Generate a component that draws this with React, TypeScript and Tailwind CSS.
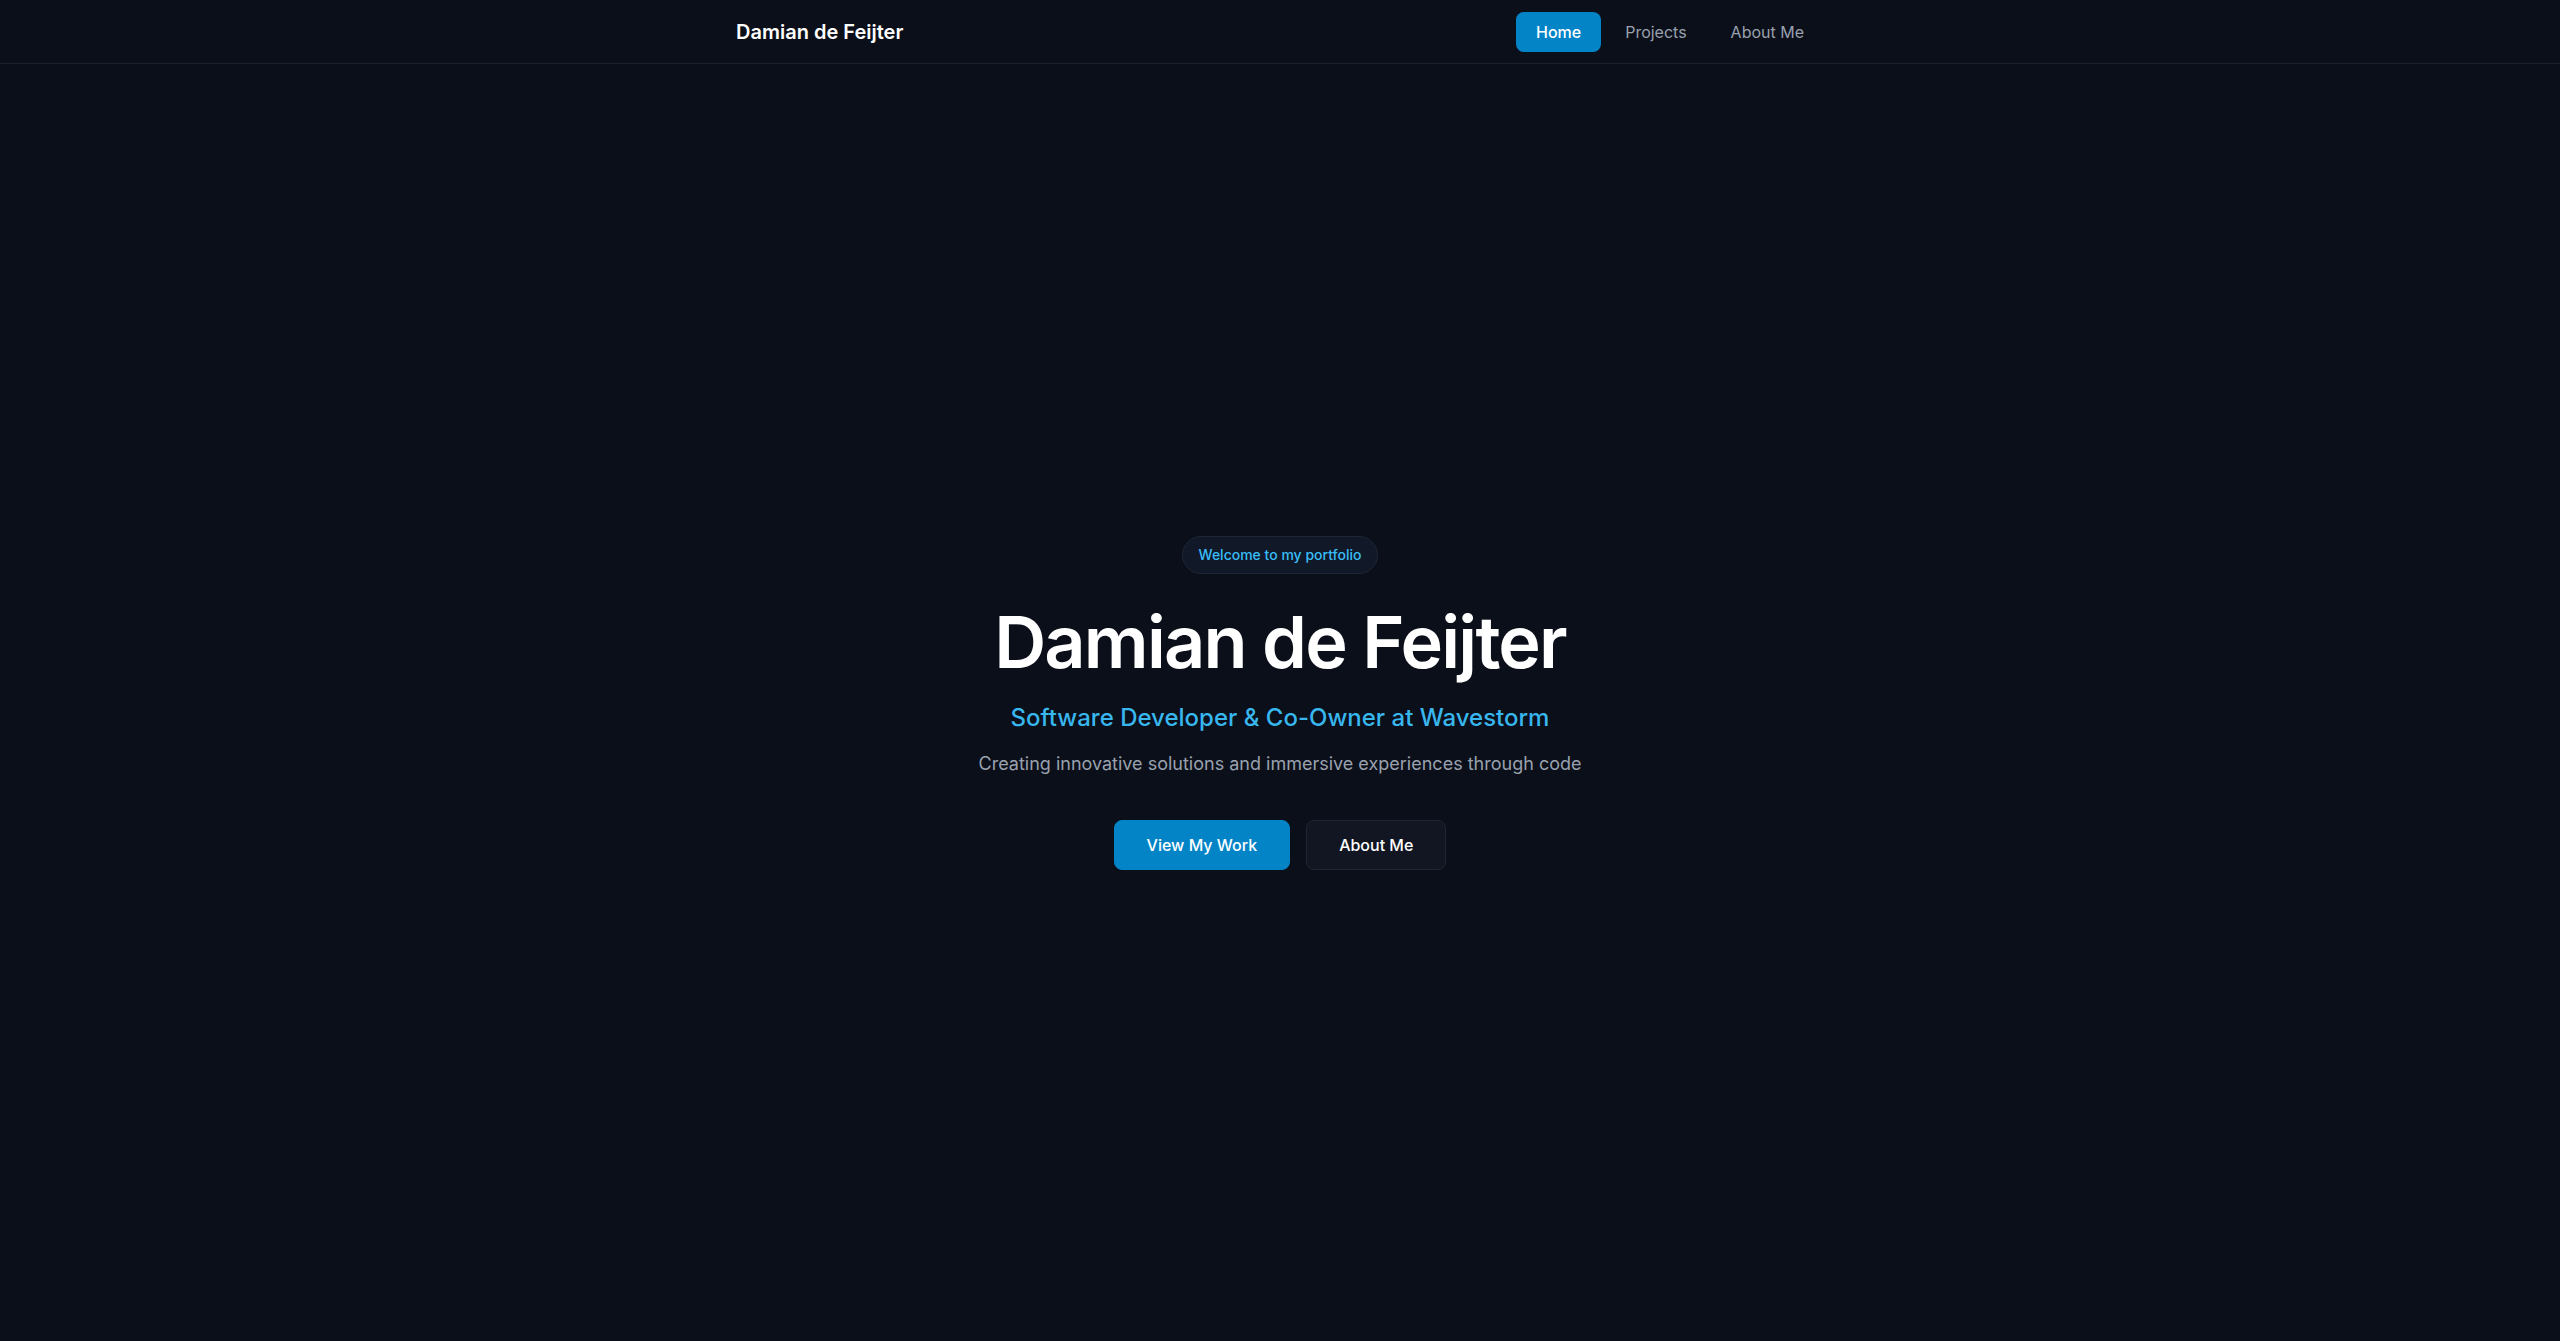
import { useState } from 'react'

/**
 * Portfolio landing: top nav + centred hero.
 */
const links = ['Home', 'Projects', 'About Me']

function Nav() {
  const [active, setActive] = useState('Home')

  return (
    <header className="h-16 border-b border-[#1a202c] bg-[#0b0f19]">
      <div className="mx-auto flex h-full max-w-6xl items-center justify-between px-8">
        <a href="#" className="text-xl font-semibold text-white">
          Damian de Feijter
        </a>
        <nav className="flex items-center gap-1">
          {links.map((link) => (
            <button
              key={link}
              onClick={() => setActive(link)}
              className={
                active === link
                  ? 'rounded-lg bg-[#0284c7] px-5 py-2 text-base font-medium text-white'
                  : 'rounded-lg px-5 py-2 text-base text-gray-400 hover:text-white'
              }
            >
              {link}
            </button>
          ))}
        </nav>
      </div>
    </header>
  )
}

function Hero() {
  return (
    <main className="flex flex-1 items-center justify-center px-8">
      <div className="flex flex-col items-center text-center">
        <span className="mb-8 rounded-full border border-[#1e2635] bg-[#111827] px-4 py-2 text-sm font-medium text-[#38bdf8]">
          Welcome to my portfolio
        </span>
        <h1 className="mb-6 text-7xl leading-none font-semibold tracking-tight text-white">
          Damian de Feijter
        </h1>
        <p className="mb-4 text-2xl font-medium text-[#38b6ee]">Software Developer &amp; Co-Owner at Wavestorm</p>
        <p className="mb-[42px] text-lg text-gray-400">
          Creating innovative solutions and immersive experiences through code
        </p>
        <div className="flex items-center gap-4">
          <a
            href="#"
            className="rounded-lg border border-[#0284c7] bg-[#0284c7] px-8 py-3 text-base font-medium text-white"
          >
            View My Work
          </a>
          <a
            href="#"
            className="rounded-lg border border-[#1f2633] bg-[#111622] px-8 py-3 text-base font-medium text-white"
          >
            About Me
          </a>
        </div>
      </div>
    </main>
  )
}

export default function App() {
  return (
    <div className="flex min-h-screen flex-col bg-[#0b0f19] font-['Inter',sans-serif] antialiased">
      <Nav />
      <Hero />
    </div>
  )
}
